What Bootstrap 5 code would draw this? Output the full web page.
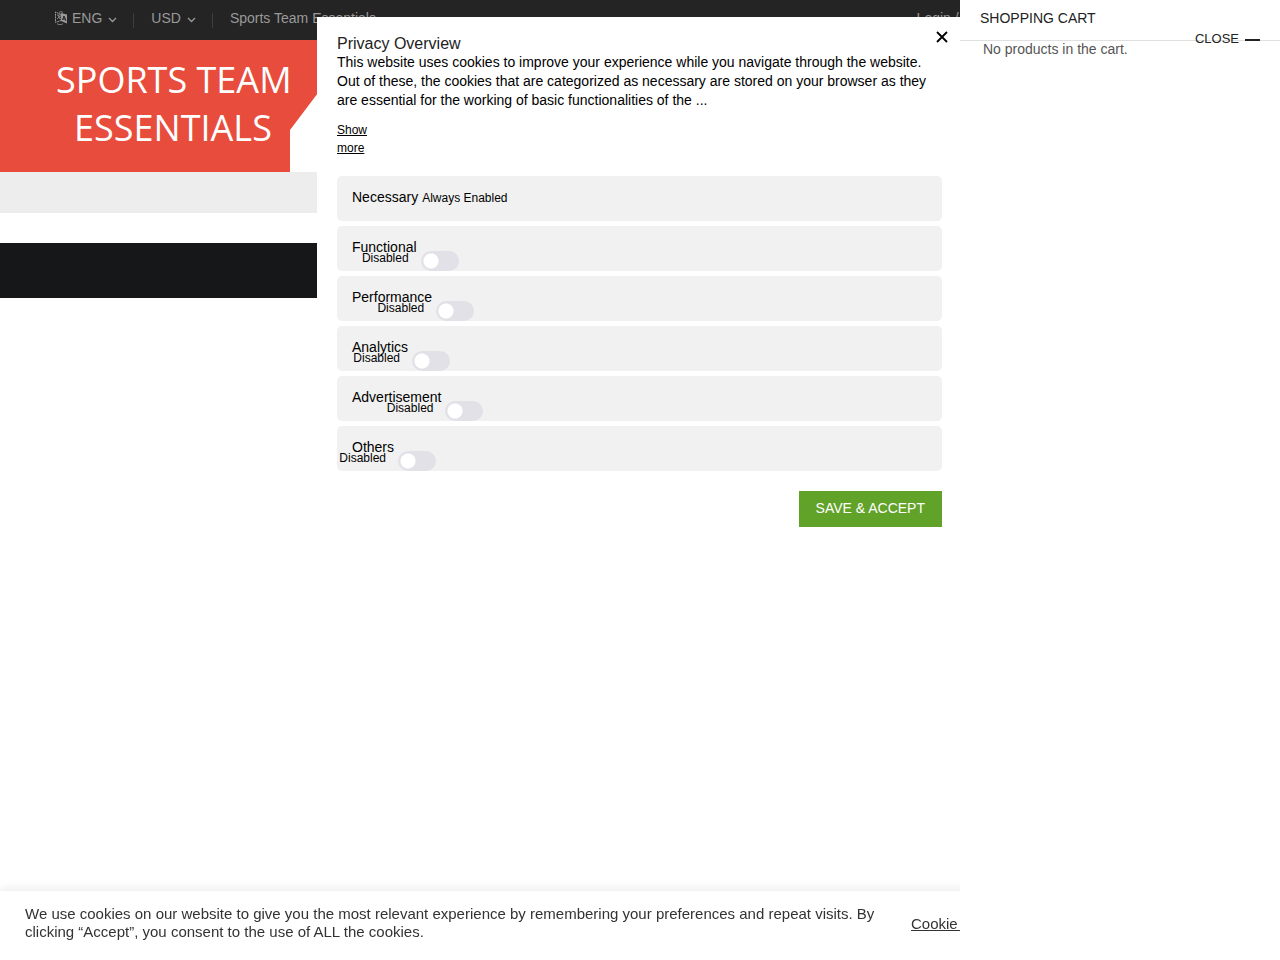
<!DOCTYPE html>
<html lang="en">
<head>
<meta charset="utf-8">
<meta name="viewport" content="width=device-width, initial-scale=1">
<title>Sports Team Essentials</title>
<link href="https://cdn.jsdelivr.net/npm/bootstrap@5.3.0/dist/css/bootstrap.min.css" rel="stylesheet">
<style>
  body { font-family: "Liberation Sans", Arial, sans-serif; font-size: 14px; line-height: 20px; color: #000; }
  button, input { font-family: inherit; }

  /* top bar */
  .topbar { background: #242424; height: 40px; padding: 8px 54px 0; }
  .topbar a, .topbar button { color: #999; font-size: 14px; line-height: 20px; text-decoration: none; white-space: nowrap; }
  .topbar button { background: none; border: 0; padding: 0; }
  .topbar button svg:last-child { margin: 4px 0 0 6px; }
  .topbar .divider { width: 1px; height: 15px; background: #3e3e3e; margin: 5px 17px 0 16px; }
  .topbar .login { margin-right: 216px; }

  /* header */
  .masthead { height: 132px; background: #fff; }
  .brand { width: 358px; height: 132px; padding: 16px 0 0 56px; background: #e84c3d;
    clip-path: polygon(0 0, 358px 0, 290px 90px, 290px 132px, 0 132px); }
  .brand a { width: 234px; color: #fff; font-family: "Open Sans", sans-serif; font-size: 36px; line-height: 48px; text-decoration: none; white-space: nowrap; }
  .titlebar { height: 41px; background: #ededed; }
  .footbar { height: 55px; background: #161719; margin-top: 30px; }

  /* consent dialog */
  .consent { position: fixed; z-index: 1050; top: 17px; left: 0; right: 0; margin: 0 auto; width: 100%; max-width: 646px; padding: 17px 21px 20px 20px; background: #fff; }
  .consent h2 { font-size: 16px; line-height: 19px; color: #222; font-weight: 400; margin: 0; }
  .consent p { line-height: 19px; margin: 0 0 11px; }
  .consent .more { width: 40px; font-size: 12px; line-height: 18px; color: #000; margin-bottom: 19px; }
  .consent .dismiss { position: absolute; top: 10px; right: 11px; width: 20px; height: 20px; padding: 0; border: 0; background: none; }
  .option { height: 45px; padding: 11px 15px 0; border-radius: 5px; background: #f1f1f1; }
  .option small { font-size: 12px; line-height: 20px; }
  .switch-wrap { margin: 14px 0 0 4px; height: 20px; }
  .switch-wrap input { appearance: none; display: block; width: 38px; height: 20px; margin: 0; border-radius: 10px;
    background: radial-gradient(circle 8px at 10px 10px, #fff 7px, transparent 8px) #e3e1e8; }
  .switch-wrap label { position: absolute; right: 100%; top: 0; margin-right: 12px; font-size: 12px; line-height: 14px; }
  .save { background: #61a229; color: #fff; border: 0; border-radius: 0; font-size: 14px; line-height: 20px; padding: 7px 17px 9px; margin-top: 20px; }

  /* cookie strip */
  .strip { position: fixed; z-index: 1040; left: 0; right: 0; bottom: 0; background: #fff; color: #333; padding: 14px 25px 19px;
    box-shadow: 0 -1px 10px rgba(172, 171, 171, .3); font-size: 15px; line-height: 18px; }
  .strip p { margin: 0 20px 0 0; }
  .strip .actions { flex: 0 0 344px; padding-top: 2px; }
  .strip a { color: #333; }
  .strip button { background: #61a229; color: #fff; border: 0; padding: 7px 16px; }

  /* cart drawer */
  .cart { position: fixed; z-index: 1060; top: 0; right: 0; bottom: 0; width: 320px; background: #fff; }
  .cart header { height: 41px; padding: 8px 20px 0; border-bottom: 1px solid #e0e0e0; }
  .cart h2 { font-size: 14px; line-height: 20px; font-weight: 400; color: #222; margin: 0; }
  .cart .shut { position: absolute; right: 20px; top: 29px; font-size: 13px; line-height: 20px; color: #222; background: none; border: 0; padding: 0; }
  .cart .shut i { width: 15px; height: 2px; background: #222; margin: 1px 0 0 6px; }
  .cart p { padding: 0 23px; margin: -2px 0 0; color: #555; }
</style>
</head>
<body>
<div class="topbar d-flex align-items-start">
  <button class="d-flex align-items-center" type="button">
    <svg class="me-1" width="14" height="14" viewBox="0 0 14 14" fill="none" stroke="#999" aria-hidden="true"><path d="M7 3.500 1.500 1v10.500L7 9.500z" stroke-dasharray="2 .6"/><path d="M3 4h3M3 8l3-3M4 4l2 4" stroke-width=".8"/><path d="M7 2l6 1.500v9L7 10z" fill="#999" stroke="none"/><path d="M8.500 9 10 5l2 5M9 8h2.500" stroke="#242424"/><path d="M3 12.800c2 1 4 1 6 0M5 1.500c1-1 3-1 4 0" stroke-width=".8"/></svg>
    ENG
    <svg width="9" height="6" viewBox="0 0 9 6" fill="none" stroke="#999" stroke-width="1.300" aria-hidden="true"><path d="M1 1l3.500 3.500L8 1"/></svg>
  </button>
  <span class="divider"></span>
  <button class="d-flex align-items-center" type="button">
    USD
    <svg width="9" height="6" viewBox="0 0 9 6" fill="none" stroke="#999" stroke-width="1.300" aria-hidden="true"><path d="M1 1l3.500 3.500L8 1"/></svg>
  </button>
  <span class="divider"></span>
  <a href="#">Sports Team Essentials</a>
  <a class="login ms-auto" href="#">Login / Sign up</a>
</div>

<div class="masthead">
  <div class="brand"><a class="d-block text-center" href="#">SPORTS TEAM<br>ESSENTIALS</a></div>
</div>
<div class="titlebar"></div>
<div class="footbar"></div>

<section class="consent" role="dialog" aria-labelledby="consent-title">
  <button class="dismiss" type="button" aria-label="Close">
    <svg class="d-block" width="20" height="20" viewBox="0 0 20 20" fill="none" stroke="#000" stroke-width="1.800"><path d="M5 5l10 10M15 5L5 15"/></svg>
  </button>
  <h2 id="consent-title">Privacy Overview</h2>
  <p>This website uses cookies to improve your experience while you navigate through the website. Out of these, the cookies that are categorized as necessary are stored on your browser as they are essential for the working of basic functionalities of the ...</p>
  <a class="more d-block" href="#">Show more</a>
  <div class="d-grid" style="gap:5px">
    <div class="option d-flex align-items-baseline"><span>Necessary</span><small class="ms-1">Always Enabled</small></div>
    <div class="option d-flex"><span>Functional</span><div class="switch-wrap position-relative"><label for="c1">Disabled</label><input type="checkbox" id="c1"></div></div>
    <div class="option d-flex"><span>Performance</span><div class="switch-wrap position-relative"><label for="c2">Disabled</label><input type="checkbox" id="c2"></div></div>
    <div class="option d-flex"><span>Analytics</span><div class="switch-wrap position-relative"><label for="c3">Disabled</label><input type="checkbox" id="c3"></div></div>
    <div class="option d-flex"><span>Advertisement</span><div class="switch-wrap position-relative"><label for="c4">Disabled</label><input type="checkbox" id="c4"></div></div>
    <div class="option d-flex"><span>Others</span><div class="switch-wrap position-relative"><label for="c5">Disabled</label><input type="checkbox" id="c5"></div></div>
  </div>
  <div class="d-flex justify-content-end"><button class="save btn" type="button">SAVE &amp; ACCEPT</button></div>
</section>

<div class="strip d-flex align-items-center">
  <p class="flex-grow-1">We use cookies on our website to give you the most relevant experience by remembering your preferences and repeat visits. By clicking “Accept”, you consent to the use of ALL the cookies.</p>
  <div class="actions d-flex justify-content-between align-items-center"><a href="#">Cookie settings</a><button type="button">ACCEPT</button></div>
</div>

<aside class="cart">
  <header><h2>SHOPPING CART</h2></header>
  <button class="shut d-flex align-items-center" type="button">CLOSE<i></i></button>
  <p>No products in the cart.</p>
</aside>
<script src="https://cdn.jsdelivr.net/npm/bootstrap@5.3.0/dist/js/bootstrap.bundle.min.js"></script>
</body>
</html>
